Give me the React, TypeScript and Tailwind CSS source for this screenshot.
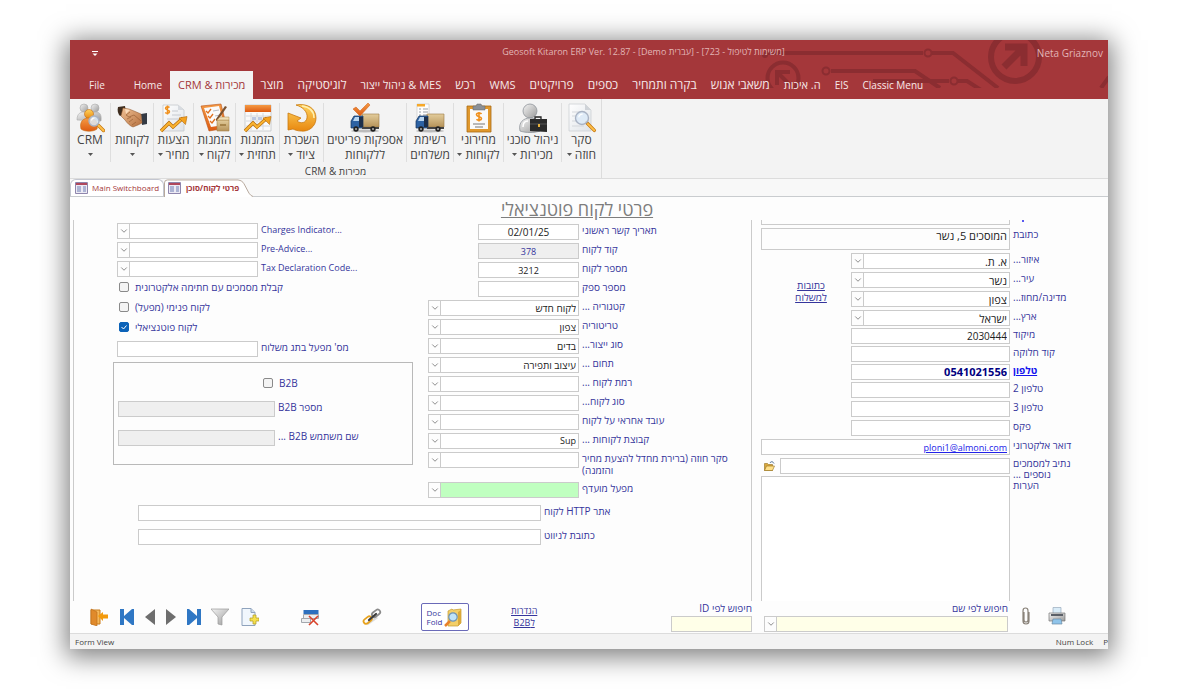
import { useId } from "react";
import type { ReactNode } from "react";
import { ChevronDown } from "lucide-react";
import { twMerge } from "tailwind-merge";

const menuTabs = [
  { name: "מוצר", look: "text-xs" },
  { name: "לוגיסטיקה", look: "text-xs" },
  { name: "ניהול ייצור & MES", look: "text-[11px]" },
  { name: "רכש", look: "text-xs" },
  { name: "WMS", look: "text-[11px]" },
  { name: "פרויקטים", look: "text-xs" },
  { name: "כספים", look: "text-xs" },
  { name: "בקרה ותמחיר", look: "text-xs" },
  { name: "משאבי אנוש", look: "text-xs" },
  { name: "ה. איכות", look: "text-[11px]" },
  { name: "EIS", look: "text-[10px]" },
  { name: "Classic Menu", look: "text-[10px]" },
];

/* ---------- ribbon drawings ---------- */

const Gradients = () => (
  <svg className="absolute h-0 w-0" aria-hidden="true">
    <defs>
      <linearGradient id="gold" x1="0" y1="0" x2="0" y2="1">
        <stop offset="0" stopColor="#ffd45e" />
        <stop offset="1" stopColor="#e8870f" />
      </linearGradient>
      <linearGradient id="orange" x1="0" y1="0" x2="0" y2="1">
        <stop offset="0" stopColor="#f59b45" />
        <stop offset="1" stopColor="#dd5b12" />
      </linearGradient>
      <linearGradient id="silver" x1="0" y1="0" x2="1" y2="1">
        <stop offset="0" stopColor="#f4f4f4" />
        <stop offset="1" stopColor="#9a9a9a" />
      </linearGradient>
      <linearGradient id="paper" x1="0" y1="0" x2="1" y2="1">
        <stop offset="0" stopColor="#ffffff" />
        <stop offset="1" stopColor="#dfe3e8" />
      </linearGradient>
      <linearGradient id="box" x1="0" y1="0" x2="0" y2="1">
        <stop offset="0" stopColor="#e3cd9c" />
        <stop offset="1" stopColor="#b6935a" />
      </linearGradient>
      <linearGradient id="skin" x1="0" y1="0" x2="1" y2="1">
        <stop offset="0" stopColor="#f0c195" />
        <stop offset="1" stopColor="#b56f3d" />
      </linearGradient>
    </defs>
  </svg>
);

const Pic = ({ children }: { children: ReactNode }) => (
  <svg viewBox="0 0 30 30" className="h-[30px] w-[30px]" aria-hidden="true">
    {children}
  </svg>
);

const Lens = ({ x, y, r }: { x: number; y: number; r: number }) => (
  <>
    <path d={`M${x + r * 0.7} ${y + r * 0.7}L${x + r * 1.9} ${y + r * 1.9}`} stroke="#c77a12" strokeWidth="3.4" strokeLinecap="round" />
    <path d={`M${x + r * 0.9} ${y + r * 0.9}L${x + r * 1.9} ${y + r * 1.9}`} stroke="#ffc04a" strokeWidth="1.8" strokeLinecap="round" />
    <circle cx={x} cy={y} r={r} fill="#dceaf8" fillOpacity=".85" stroke="#a9b3c4" strokeWidth="1.4" />
    <path d={`M${x - r * 0.5} ${y - r * 0.1}a${r * 0.6} ${r * 0.6} 0 0 1 ${r * 0.6} -${r * 0.5}`} stroke="#fff" strokeWidth="1.2" fill="none" />
  </>
);

const Trend = () => (
  <>
    <path d="M2 28l8-8 4 4 10-9" fill="none" stroke="#b36a0c" strokeWidth="3.4" />
    <path d="M2 28l8-8 4 4 10-9" fill="none" stroke="#fbb431" strokeWidth="2" />
    <path d="M20 15l8-1.500-1.500 8z" fill="#f5a21f" stroke="#b36a0c" strokeWidth=".6" />
  </>
);

const Truck = () => (
  <>
    <ellipse cx="15" cy="28" rx="14" ry="1.500" fill="#bbb" />
    <path d="M12 11h17v13H12z" fill="url(#box)" stroke="#9a7a45" strokeWidth=".6" />
    <path d="M1 24v-6l3-5h9v12H1z" fill="#2d62a3" stroke="#16335c" strokeWidth=".7" />
    <path d="M3 18l2-4h4v4z" fill="#b9d5ef" />
    <path d="M9 14h4v10H9z" fill="#1d2f4a" />
    <path d="M12 24h17v2H12z" fill="#444" />
    <circle cx="6" cy="26" r="2.700" fill="#222" />
    <circle cx="6" cy="26" r="1.100" fill="#aaa" />
    <circle cx="23" cy="26" r="2.700" fill="#222" />
    <circle cx="23" cy="26" r="1.100" fill="#aaa" />
  </>
);

const CrmPic = () => (
  <Pic>
    <circle cx="9" cy="5" r="4" fill="url(#silver)" stroke="#aaa" strokeWidth=".6" />
    <circle cx="20" cy="5" r="4" fill="url(#silver)" stroke="#aaa" strokeWidth=".6" />
    <path d="M2 17c0-7 4-8 7-8s5 2 6 4c1-2 3-4 6-4s6 2 5 9z" fill="url(#silver)" stroke="#aaa" strokeWidth=".6" />
    <circle cx="14" cy="11" r="4.500" fill="url(#gold)" stroke="#c56b12" strokeWidth=".6" />
    <path d="M6 26c-2-8 3-11 8-11s10 3 8 11c-4 3-12 3-16 0z" fill="url(#orange)" stroke="#c56b12" strokeWidth=".6" />
    <Lens x={19} y={18} r={5} />
  </Pic>
);

const HandsPic = () => (
  <Pic>
    <path d="M1 4l7-1 1 7-6 3c-2-2-3-6-2-9z" fill="#3d2c1e" />
    <path d="M24 11l6-1v11l-5 1z" fill="#333a44" />
    <path d="M6 5l6 1 5 2 7 3 1 9-4 2-5 2c-3-1-6-4-8-7l-4-4z" fill="url(#skin)" stroke="#8a5228" strokeWidth=".5" />
    <path d="M13 9l-4 3 3 2 5-2 7 6M10 16l4-2M12 19l4-3M15 22l4-3" fill="none" stroke="#9a6236" strokeWidth=".7" />
    <path d="M8 6l5 1-4 4z" fill="#fbdcbb" />
  </Pic>
);

const QuotePic = () => (
  <Pic>
    <path d="M4 2h15l6 5v21H4z" fill="url(#paper)" stroke="#c4c8cc" strokeWidth=".8" />
    <path d="M19 2v5h6z" fill="#d7dbe0" />
    <path d="M13 8h6M13 12h9M8 16h12" stroke="#c6cad0" />
    <path d="M10.500 4.500c-1-1-4-1-4 .8 0 2 4 1.500 4 3.500 0 1.800-3 2-4.300.7M8.500 2.500v9" fill="none" stroke="#f0901c" strokeWidth="1.500" />
    <Trend />
  </Pic>
);

const OrdersPic = () => (
  <Pic>
    <path d="M1 3l20-2 6 24-18 3z" fill="url(#orange)" stroke="#b85318" strokeWidth=".6" />
    <path d="M4 5l15-2 5 19-13 2z" fill="#fbfbfb" />
    <path d="M6 8l2 2 3-4M8 13l2 2 3-4M10 18l2 2 3-4" fill="none" stroke="#e06f1c" strokeWidth="1.300" />
    <path d="M13 8l6-1M15 13l5-1" stroke="#b8bcc2" />
    <path d="M25 3l2 1-9 13-2 1v-2z" fill="#7b5230" />
    <path d="M17 17h12v11H17z" fill="url(#box)" stroke="#a88549" strokeWidth=".6" />
    <path d="M17 17l3-3h9v3z" fill="#f0dfb8" stroke="#a88549" strokeWidth=".5" />
    <path d="M20 22h6" stroke="#9a763b" strokeWidth="1.500" />
  </Pic>
);

const ForecastPic = () => (
  <Pic>
    <path d="M2 2h26v26H2z" fill="#fafafa" stroke="#c0c4c8" strokeWidth=".8" />
    <path d="M2 2h26v7H2z" fill="url(#orange)" />
    <path d="M3 13h24M3 18h24M3 23h24M8 10v17M14 10v17M20 10v17" stroke="#cdd1d8" strokeWidth=".8" />
    <path d="M9 14h4v3H9zM15 14h4v3h-4z" fill="#bcc8e2" />
    <Trend />
  </Pic>
);

const RentPic = () => (
  <Pic>
    <path
      d="M9 2C20 0 29 5 29 15c0 9-8 14-15 13-3 0-6-1-8-2l-5 1V10l13 5-4 3c4 3 9 2 10-3 1-6-4-11-11-13z"
      fill="url(#gold)"
      stroke="#c9790f"
      strokeWidth=".8"
    />
    <path d="M15 3c7 1 12 5 12 12" fill="none" stroke="#fff0b0" strokeWidth="1.500" />
  </Pic>
);

const DeliveryPic = () => (
  <Pic>
    <Truck />
    <path d="M3 6l3-2 4 4 8-8 2 2-10 11z" fill="url(#orange)" stroke="#cf5a10" strokeWidth=".5" />
  </Pic>
);

const ShipListPic = () => (
  <Pic>
    <path d="M2 1h12v16H2z" fill="#fdfdfd" stroke="#c9c9c9" strokeWidth=".7" />
    <path d="M2 1h8v2.500H2z" fill="#f6a828" />
    <path d="M4 6h2M8 6h5M4 9h2M8 9h5M4 12h2M8 12h5" stroke="#9aa0a8" strokeWidth="1.100" />
    <Truck />
  </Pic>
);

const PricePic = () => (
  <Pic>
    <path d="M3 3h24v26H3z" fill="#e0982d" stroke="#a86914" strokeWidth=".8" />
    <path d="M6 6h18v20H6z" fill="#fafafa" />
    <path d="M9 3h3l1-2h4l1 2h3v4H9z" fill="#8b9096" stroke="#666" strokeWidth=".5" />
    <path d="M17.500 11c-1-1.500-5-1.500-5 .8 0 2.200 5 1.500 5 3.700 0 2-3.700 2.300-5 .7M15 9v9.500" fill="none" stroke="#f0901c" strokeWidth="1.600" />
    <path d="M9 21h12M11 24h8" stroke="#777" strokeWidth="1.200" />
  </Pic>
);

const AgentPic = () => (
  <Pic>
    <circle cx="12" cy="8" r="7" fill="url(#silver)" stroke="#8f949a" strokeWidth=".8" />
    <path d="M2 28c-2-9 4-13 10-13s9 3 10 7v6c-6 2-14 2-20 0z" fill="url(#silver)" stroke="#8f949a" strokeWidth=".8" />
    <path d="M5 24c0-4 2-6 5-6" stroke="#fff" strokeWidth="1.500" fill="none" />
    <path d="M17 16v-2h6v2" fill="none" stroke="#222" strokeWidth="1.300" />
    <path d="M12 16h17v13l-17-1z" fill="#2a2a2a" />
    <path d="M12 21h17" stroke="#555" />
    <path d="M20 21h2v3h-2z" fill="#e9b13c" />
  </Pic>
);

const SurveyPic = () => (
  <Pic>
    <path d="M2 1h16l6 6v21H2z" fill="url(#paper)" stroke="#cdd0d4" strokeWidth=".8" />
    <path d="M18 1v6h6z" fill="#cfd3d8" />
    <path d="M5 9h7M5 13h6M5 18h7M5 23h12" stroke="#d4d7dc" />
    <Lens x={15} y={15} r={6.5} />
  </Pic>
);

type RibbonItem = { lines: [string, string]; arrow: boolean; width: string; pic: ReactNode };

const ribbon: RibbonItem[] = [
  { lines: ["CRM", ""], arrow: true, width: "w-[41px]", pic: <CrmPic /> },
  { lines: ["לקוחות", ""], arrow: true, width: "w-[43px]", pic: <HandsPic /> },
  { lines: ["הצעות", "מחיר"], arrow: true, width: "w-[40px]", pic: <QuotePic /> },
  { lines: ["הזמנות", "לקוח"], arrow: true, width: "w-[42px]", pic: <OrdersPic /> },
  { lines: ["הזמנות", "תחזית"], arrow: true, width: "w-[44px]", pic: <ForecastPic /> },
  { lines: ["השכרת", "ציוד"], arrow: true, width: "w-[44px]", pic: <RentPic /> },
  { lines: ["אספקות פריטים", "ללקוחות"], arrow: false, width: "w-[83px]", pic: <DeliveryPic /> },
  { lines: ["רשימת", "משלחים"], arrow: false, width: "w-[47px]", pic: <ShipListPic /> },
  { lines: ["מחירוני", "לקוחות"], arrow: true, width: "w-[50px]", pic: <PricePic /> },
  { lines: ["ניהול סוכני", "מכירות"], arrow: true, width: "w-[58px]", pic: <AgentPic /> },
  { lines: ["סקר", "חוזה"], arrow: true, width: "w-[39px]", pic: <SurveyPic /> },
];

const Caret = () => (
  <svg viewBox="0 0 5 3" className="h-[3px] w-[5px] shrink-0" aria-hidden="true">
    <path d="M0 0h5L2.500 3z" fill="#555" />
  </svg>
);

const FormGlyph = () => (
  <svg viewBox="0 0 13 12" className="h-3 w-[13px]" aria-hidden="true">
    <path d="M.5.5h12v11H.5z" fill="#eceaf4" stroke="#8f86ad" />
    <path d="M1 1h11v2H1z" fill="#b0475c" />
    <path d="M2 5h4M2 7h4M2 9h4M8 5h3M8 7h3M8 9h3" stroke="#6f7fb4" />
  </svg>
);

/* ---------- form controls ---------- */

const box = "h-4 min-w-0 rounded-none border border-[#cbcbcb] bg-white px-0.5 text-[10px] leading-[14px] text-[#222] outline-none";
const labelText = "whitespace-nowrap text-left text-[10px] leading-3 text-[#35359c]";

type FieldProps = {
  label: ReactNode;
  value?: string;
  size: string;
  look?: string;
  labelLook?: string;
  ltr?: boolean;
};

const TextField = ({ label, value = "", size, look, labelLook, ltr }: FieldProps) => {
  const id = useId();
  return (
    <div className="flex h-4 items-start gap-[3px]">
      <input id={id} dir={ltr ? "ltr" : "rtl"} defaultValue={value} className={twMerge(box, "shrink-0", size, look)} />
      <label htmlFor={id} dir="rtl" className={twMerge(labelText, labelLook)}>
        {label}
      </label>
    </div>
  );
};

const Combo = ({ id, value = "", look }: { id: string; value?: string; look?: string }) => (
  <div className="relative flex h-4">
    <select id={id} dir="rtl" className={twMerge(box, "w-full appearance-none pl-3.5", look)}>
      <option>{value}</option>
    </select>
    <span className="pointer-events-none absolute inset-y-0 left-0 flex w-[13px] items-center justify-center border border-[#cbcbcb] bg-[#fdfdfd]">
      <ChevronDown className="h-2.5 w-2.5 shrink-0 text-[#777]" />
    </span>
  </div>
);

const SelectField = ({ label, value, size, look, labelLook }: FieldProps) => {
  const id = useId();
  return (
    <div className="flex h-4 items-start gap-[3px]">
      <div className={twMerge("shrink-0", size)}>
        <Combo id={id} value={value} look={look} />
      </div>
      <label htmlFor={id} dir="rtl" className={twMerge(labelText, labelLook)}>
        {label}
      </label>
    </div>
  );
};

const Check = ({ label, checked = false }: { label: string; checked?: boolean }) => (
  <label className="flex h-5 items-center gap-1.5">
    <span className="relative flex h-2.5 w-2.5">
      <input
        type="checkbox"
        defaultChecked={checked}
        className="peer h-2.5 w-2.5 appearance-none rounded-[2px] border border-[#8a8a8a] bg-[#f4f4f4] checked:border-[#0b62b8] checked:bg-[#0b62b8]"
      />
      <svg viewBox="0 0 10 10" className="pointer-events-none absolute inset-0 hidden peer-checked:block" aria-hidden="true">
        <path d="M2.500 5l2 2 3-3.500" fill="none" stroke="#fff" />
      </svg>
    </span>
    <span dir="rtl" className={labelText}>
      {label}
    </span>
  </label>
);

/* ---------- window parts ---------- */

const Circuit = () => (
  <svg viewBox="0 0 352 48" className="absolute right-0 top-0 h-12 w-[352px]" fill="none" stroke="#8b2d31" aria-hidden="true">
    <path d="M9 13h158M176 13h21l45 35M75 31h84l25 17M117 41h76M202 41h9l14 9M345 48l8-11" strokeWidth="4" />
    <circle cx="172" cy="13" r="3.500" strokeWidth="2" />
    <circle cx="70" cy="31" r="3.500" strokeWidth="2" />
    <circle cx="198" cy="41" r="3.500" strokeWidth="2" />
    <circle cx="9" cy="15" r="3" fill="#8b2d31" stroke="none" />
    <circle cx="27" cy="38" r="15.500" strokeWidth="4" />
    <path d="M21 45V32h13M22 33l12 12" strokeWidth="4" />
    <circle cx="259" cy="17" r="24" strokeWidth="6" />
    <path d="M249 7h19v19M267 8l-19 19" strokeWidth="7" />
  </svg>
);

const Header = () => (
  <header className="relative overflow-hidden bg-[#a4373a] text-[#f6e9e9]">
    <Circuit />
    <div className="relative flex h-[31px] items-center pl-[22px] pr-[5px] text-[10px] text-[#e2b5b6]">
      <button aria-label="Customize toolbar" className="pb-1">
        <svg viewBox="0 0 6 6" className="h-1.5 w-1.5" aria-hidden="true">
          <path d="M0 .5h6" stroke="#fff" />
          <path d="M.5 2.500h5L3 5z" fill="#fff" />
        </svg>
      </button>
      <h1 className="flex-1 whitespace-pre pb-[7px] pl-[152px] text-center text-[9px]">
        Geosoft Kitaron ERP Ver. 12.87 - [Demo <bdi>עברית</bdi>] - [723 - <bdi>משימות לטיפול</bdi>]
      </h1>
      <span className="pb-1">Neta Griaznov</span>
    </div>
    <nav className="relative flex h-7 items-stretch whitespace-nowrap">
      <button className="w-[54px] text-[10px]">File</button>
      <button className="w-[46px] pr-2 text-right text-[10px]">Home</button>
      <button className="bg-[#f3f3f3] px-2 text-[11px] text-[#a4373a]">CRM &amp; מכירות</button>
      {menuTabs.map((tab) => (
        <button key={tab.name} className={`px-[7px] ${tab.look}`}>
          {tab.name}
        </button>
      ))}
    </nav>
  </header>
);

const Ribbon = () => (
  <section className="flex border-b border-[#dcdcdc] bg-[#f3f3f3] text-xs text-[#444]">
    <div className="border-r border-[#dcdcdc] pt-1">
      <div className="flex">
        {ribbon.map((item) => (
          <button
            key={item.lines.join(" ")}
            className={`flex h-[59px] flex-col items-center whitespace-nowrap border-r border-[#dedede] last:border-r-0 ${item.width}`}
          >
            {item.pic}
            <span dir="rtl" className="h-3.5 leading-[14px]">
              {item.lines[0]}
            </span>
            <span dir="rtl" className="flex h-[15px] items-center gap-[3px] leading-[15px]">
              {item.lines[1]}
              {item.arrow && <Caret />}
            </span>
          </button>
        ))}
      </div>
      <p className="h-4 text-center text-[10px] leading-[18px]">CRM &amp; מכירות</p>
    </div>
  </section>
);

const DocTabs = () => (
  <div className="flex h-[18px] items-stretch whitespace-nowrap border-b border-[#c9cccf] bg-[#f8f8f8] text-[8px] text-[#a4373a]">
    <button className="flex w-[94px] items-center gap-1 rounded-t-md border border-b-0 border-[#c3c6d0] bg-white pl-1">
      <FormGlyph />
      Main Switchboard
    </button>
    <button className="relative -mb-px flex w-[89px] items-center gap-[5px] pl-1 font-bold">
      <svg viewBox="0 0 89 19" preserveAspectRatio="none" className="absolute inset-0 h-full w-full" aria-hidden="true">
        <path d="M.5 19V4q0-3 3-3H74q4 0 6 4l5 10q2 3 4 3.500V19z" fill="#fff" />
        <path d="M.5 19V4q0-3 3-3H74q4 0 6 4l5 10q2 3 4 3.500" fill="none" stroke="#b5a79a" />
      </svg>
      <span className="relative">
        <FormGlyph />
      </span>
      <span className="relative">פרטי לקוח/סוכן</span>
    </button>
  </div>
);

const ChargesColumn = () => (
  <div className="w-[300px] shrink-0 pt-[3px]">
    <div className="flex flex-col gap-[3px] pl-1">
      <SelectField size="w-[141px]" labelLook="text-[9px]" label={<bdi>Charges Indicator...</bdi>} />
      <SelectField size="w-[141px]" labelLook="text-[9px]" label={<bdi>Pre-Advice...</bdi>} />
      <SelectField size="w-[141px]" labelLook="text-[9px]" label={<bdi>Tax Declaration Code...</bdi>} />
    </div>
    <div className="pl-1.5">
      <Check label="קבלת מסמכים עם חתימה אלקטרונית" />
      <Check label="לקוח פנימי (מפעל)" />
      <Check label="לקוח פוטנציאלי" checked />
    </div>
    <div className="pl-1 pt-1">
      <TextField size="w-[141px]" label="מס' מפעל בתג משלוח" />
    </div>
    <div className="mt-[5px] h-[103px] border border-[#b9b9b9] pl-1 pt-2.5">
      <div className="pl-[145px]">
        <Check label="B2B" />
      </div>
      <div className="flex flex-col gap-[13px] pt-2">
        <TextField size="w-[157px]" look="bg-[#efefef]" label="מספר B2B" />
        <TextField size="w-[157px]" look="bg-[#efefef]" label="שם משתמש B2B ..." />
      </div>
    </div>
  </div>
);

const CustomerColumn = () => (
  <div className="min-w-0 flex-1 pt-1">
    <div className="flex flex-col gap-[3px] pl-[50px]">
      <TextField size="w-[101px]" look="text-center" value="02/01/25" label="תאריך קשר ראשוני" ltr />
      <TextField
        size="w-[101px]"
        look="bg-[#efefef] text-center text-[9px] text-[#35359c]"
        value="378"
        label="קוד לקוח"
        ltr
      />
      <TextField size="w-[101px]" look="text-center text-[9px]" value="3212" label="מספר לקוח" ltr />
      <TextField size="w-[101px]" label="מספר ספק" />
    </div>
    <div className="flex flex-col gap-[3px] pt-[3px]">
      <SelectField size="w-[151px]" value="לקוח חדש" label="קטגוריה ..." />
      <SelectField size="w-[151px]" value="צפון" label="טריטוריה" />
      <SelectField size="w-[151px]" value="בדים" label="סוג ייצור..." />
      <SelectField size="w-[151px]" value="עיצוב ותפירה" label="תחום ..." />
      <SelectField size="w-[151px]" label="רמת לקוח ..." />
      <SelectField size="w-[151px]" label="סוג לקוח..." />
      <SelectField size="w-[151px]" label="עובד אחראי על לקוח" />
      <SelectField size="w-[151px]" look="text-[9px]" value="Sup" label="קבוצת לקוחות ..." />
      <SelectField
        size="w-[151px]"
        label={
          <>
            סקר חוזה (ברירת מחדל להצעת מחיר
            <br />
            והזמנה)
          </>
        }
      />
    </div>
    <div className="pt-3.5">
      <SelectField size="w-[151px]" look="bg-[#c0ffc0]" label="מפעל מועדף" />
    </div>
  </div>
);

const AddressPane = () => {
  const id = useId();
  return (
    <div className="w-[347px] shrink-0">
      <div className="flex h-[5px] gap-3">
        <div className="w-[249px] border border-t-0 border-[#cbcbcb]" />
        <span className="h-0.5 w-0.5 bg-[#5a5af0]" />
      </div>
      <div className="flex gap-[3px] pt-[3px]">
        <textarea
          id={`${id}-address`}
          dir="rtl"
          defaultValue="המוסכים 5, נשר"
          className="h-[22px] w-[249px] shrink-0 resize-none overflow-hidden border border-[#cbcbcb] px-0.5 text-[11px] leading-[14px] text-[#222]"
        />
        <label htmlFor={`${id}-address`} className={labelText}>
          כתובת
        </label>
      </div>
      <div className="flex pt-[3px]">
        <div className="flex w-[90px] shrink-0 justify-center pl-2.5 pt-[26px]">
          <a href="#shipping" dir="rtl" className="text-center text-[10px] leading-3 text-[#35359c] underline">
            כתובות
            <br />
            למשלוח
          </a>
        </div>
        <div className="flex flex-col gap-[3px]">
          <SelectField size="w-[159px]" look="text-[11px]" value="א. ת." label="איזור..." />
          <SelectField size="w-[159px]" look="text-[11px]" value="נשר" label="עיר..." />
          <SelectField size="w-[159px]" look="text-[11px]" value="צפון" label="מדינה/מחוז..." />
          <SelectField size="w-[159px]" look="text-[11px]" value="ישראל" label="ארץ..." />
        </div>
      </div>
      <div className="flex flex-col gap-0.5 pl-[90px] pt-0.5">
        <TextField size="w-[159px]" look="text-right" value="2030444" label="מיקוד" ltr />
        <TextField size="w-[159px]" label="קוד חלוקה" />
        <TextField
          size="w-[159px]"
          look="text-right text-[11px] font-bold text-[#000080]"
          value="0541021556"
          label="טלפון"
          labelLook="font-bold text-[#1414ee] underline"
          ltr
        />
        <TextField size="w-[159px]" label="טלפון 2" />
      </div>
      <div className="flex flex-col gap-[3px] pl-[90px] pt-[3px]">
        <TextField size="w-[159px]" label="טלפון 3" />
        <TextField size="w-[159px]" label="פקס" />
      </div>
      <div className="flex flex-col gap-[3px] pt-[3px]">
        <TextField
          size="w-[249px]"
          look="text-right text-[9px] text-[#2222e8] underline"
          value="ploni1@almoni.com"
          label="דואר אלקטרוני"
          ltr
        />
        <div className="flex items-start">
          <button aria-label="פתח תיקייה" className="h-4 w-[19px] pl-[3px]">
            <svg viewBox="0 0 11 10" className="h-2.5 w-[11px]" aria-hidden="true">
              <path d="M.5 9.500v-7h3l1 1h4v6z" fill="#d9a93f" stroke="#94711f" strokeWidth=".6" />
              <path d="M.5 9.500l2-4.500h8l-2 4.500z" fill="#ffe08a" stroke="#94711f" strokeWidth=".6" />
              <path d="M6 2c1-2 3-1.500 4 .5" fill="none" stroke="#49688f" />
            </svg>
          </button>
          <TextField
            size="w-[230px]"
            labelLook="leading-[11px]"
            label={
              <>
                נתיב למסמכים
                <br />
                נוספים ...
              </>
            }
          />
        </div>
      </div>
      <div className="flex gap-[3px] pt-0.5">
        <textarea
          id={`${id}-notes`}
          dir="rtl"
          className="h-[125px] w-[249px] shrink-0 resize-none border border-b-0 border-[#cbcbcb] bg-white text-xs"
        />
        <label htmlFor={`${id}-notes`} className={twMerge(labelText, "pt-[3px]")}>
          הערות
        </label>
      </div>
    </div>
  );
};

/* ---------- record toolbar ---------- */

const toolPics: { name: string; width: string; pic: ReactNode }[] = [
  {
    name: "Exit",
    width: "w-[30px]",
    pic: (
      <>
        <path d="M1 2h9v14H1z" fill="#f6b85a" stroke="#c77a1d" />
        <path d="M1 1l6 3v14l-6-2z" fill="#e08a2b" stroke="#b86a14" strokeWidth=".6" />
        <path d="M8 8l5-4v2.500h5v4h-5V13z" fill="#f39a0c" />
      </>
    ),
  },
  {
    name: "First",
    width: "w-[26px]",
    pic: <path d="M2 1h4v7l8-7h2v16h-2l-8-7v7H2z" fill="#2f77c4" />,
  },
  { name: "Previous", width: "w-[20px]", pic: <path d="M14 1v16L4 9z" fill="#6e6e6e" /> },
  { name: "Next", width: "w-[22px]", pic: <path d="M4 1v16l10-8z" fill="#6e6e6e" /> },
  {
    name: "Last",
    width: "w-[24px]",
    pic: <path d="M16 1h-4v7L4 1H2v16h2l8-7v7h4z" fill="#2f77c4" />,
  },
  {
    name: "Filter",
    width: "w-[28px]",
    pic: <path d="M0 1h18l-7 8v8l-4-1V9z" fill="url(#silver)" stroke="#999" strokeWidth=".7" />,
  },
  {
    name: "New",
    width: "w-[32px]",
    pic: (
      <>
        <path d="M1 .5h9l4 4v13H1z" fill="#f1f7fd" stroke="#8fa3bd" />
        <path d="M10 .5v4h4" fill="#cfdced" stroke="#8fa3bd" />
        <path d="M12 7h3v3h3v3h-3v3h-3v-3H9v-3h3z" fill="#f5e04e" stroke="#b09a22" strokeWidth=".7" />
      </>
    ),
  },
];

const Toolbar = () => {
  const id = useId();
  return (
    <footer className="flex h-8 items-start pl-[14px]">
      <div className="flex items-center pt-[7px]">
        {toolPics.map((t) => (
          <button key={t.name} aria-label={t.name} className={`flex justify-center ${t.width}`}>
            <svg viewBox="0 0 18 18" className="h-[18px] w-[18px]" aria-hidden="true">
              {t.pic}
            </svg>
          </button>
        ))}
        <button aria-label="Delete" className="ml-[35px]">
          <svg viewBox="0 0 18 18" className="h-[18px] w-[18px]" aria-hidden="true">
            <path d="M2.500 2h15v4h-15z" fill="#2c6fbe" />
            <path d="M2.500 6.500h15v4h-15zM.5 10.500h9v4h-9z" fill="#eceef0" stroke="#a3a8ae" />
            <path d="M8 8l9 9M17 8l-9 9" stroke="#d9432b" strokeWidth="1.600" />
          </svg>
        </button>
        <button aria-label="Link" className="ml-[43px]">
          <svg viewBox="0 0 20 18" className="h-[18px] w-5" fill="none" aria-hidden="true">
            <path d="M5 16l10-7" stroke="#ddd" strokeWidth="3" />
            <rect x="1" y="10" width="9" height="5" rx="2.500" transform="rotate(-38 5 12)" stroke="#e6a11c" strokeWidth="1.800" />
            <rect x="10" y="3" width="9" height="5" rx="2.500" transform="rotate(-38 14 6)" stroke="#8a8a8a" strokeWidth="1.800" />
            <path d="M7 12l7-6" stroke="#3c3c3c" strokeWidth="2.200" strokeLinecap="round" />
          </svg>
        </button>
      </div>
      <button className="ml-[39px] mt-0.5 flex h-7 w-12 items-center justify-center gap-0.5 rounded-[2px] border border-[#6a6ab8] bg-white text-left text-[8px] leading-[9px] text-[#35359c]">
        <span>
          Doc
          <br />
          Fold
        </span>
        <svg viewBox="0 0 19 19" className="h-[19px] w-[19px]" aria-hidden="true">
          <path d="M4 3l4-2 1 1 8-1v14l-3 3H4z" fill="#f3cf67" stroke="#c49a2e" strokeWidth=".7" />
          <path d="M14 4v14l3-3V2z" fill="#dba93a" />
          <path d="M6 13l-5 5" stroke="#e8812a" strokeWidth="2.500" />
          <circle cx="9" cy="9" r="4.200" fill="#bfe3f8" stroke="#6f93b3" strokeWidth="1.200" />
        </svg>
      </button>
      <a href="#b2b" dir="rtl" className="ml-[42px] mt-1 text-center text-[9px] leading-3 text-[#35359c] underline">
        הגדרות
        <br />
        לB2B
      </a>
      <div className="ml-auto flex items-start gap-3 pt-px">
        <div className="flex flex-col items-end">
          <label htmlFor={`${id}-id`} dir="rtl" className={labelText}>
            חיפוש לפי ID
          </label>
          <input id={`${id}-id`} className={twMerge(box, "mt-0.5 w-[81px] bg-[#ffffe8]")} />
        </div>
        <div className="w-[244px]">
          <label htmlFor={`${id}-name`} dir="rtl" className={twMerge(labelText, "block text-right")}>
            חיפוש לפי שם
          </label>
          <div className="mt-0.5">
            <Combo id={`${id}-name`} look="bg-[#ffffe8]" />
          </div>
        </div>
      </div>
      <div className="flex w-[100px] gap-4 pl-3 pt-1.5">
        <button aria-label="Attach">
          <svg viewBox="0 0 12 18" className="h-[18px] w-3" fill="none" aria-hidden="true">
            <path d="M4 5v8q0 2 2 2t2-2V4q0-3-2.500-3T3 4v10q0 3 3 3t3-3V5" stroke="#8a837a" strokeWidth="1.200" />
          </svg>
        </button>
        <button aria-label="Print">
          <svg viewBox="0 0 18 18" className="h-[18px] w-[18px]" aria-hidden="true">
            <path d="M5 .5h8V7H5z" fill="#d9ecf8" stroke="#9ab" strokeWidth=".7" />
            <path d="M1 6h16v8H1z" fill="url(#silver)" stroke="#777" strokeWidth=".7" />
            <path d="M3 7h12v2H3z" fill="#5b6068" />
            <path d="M5 12h8l1 5H4z" fill="#8fc4ea" stroke="#6a8ba5" strokeWidth=".7" />
          </svg>
        </button>
      </div>
    </footer>
  );
};

const App = () => (
  <div className="min-h-screen bg-white pb-10 pl-[70px] pr-[92px] pt-10 font-['Open_Sans','Liberation_Sans',sans-serif]">
    <Gradients />
    <div className="shadow-[0_4px_24px_4px_rgba(0,0,0,0.5)]">
      <Header />
      <Ribbon />
      <DocTabs />
      <main className="bg-[#fdfdfd]">
        <h2 className="h-[23px] pr-6 text-center text-lg leading-[24px] text-[#7d7d7d] underline">
          פרטי לקוח פוטנציאלי
        </h2>
        <div className="flex pl-[3px]">
          <div className="mr-[9px] min-w-0 flex-1 border-x border-[#cbcbcb]">
            <div className="flex gap-[15px] pl-[39px]">
              <ChargesColumn />
              <CustomerColumn />
            </div>
            <div className="flex flex-col gap-2 pl-16 pt-[7px]">
              <TextField size="w-[403px]" label="אתר HTTP לקוח" />
              <TextField size="w-[403px]" label="כתובת לניווט" />
            </div>
          </div>
          <AddressPane />
        </div>
        <Toolbar />
      </main>
      <div className="flex h-4 items-center justify-between overflow-hidden whitespace-nowrap border-t border-[#dcdcdc] bg-[#f3f3f3] pl-[5px] text-[8px] text-[#444]">
        <span>Form View</span>
        <span className="flex gap-2.5">
          <span>Num Lock</span>
          <span>P</span>
        </span>
      </div>
    </div>
  </div>
);

export default App;
